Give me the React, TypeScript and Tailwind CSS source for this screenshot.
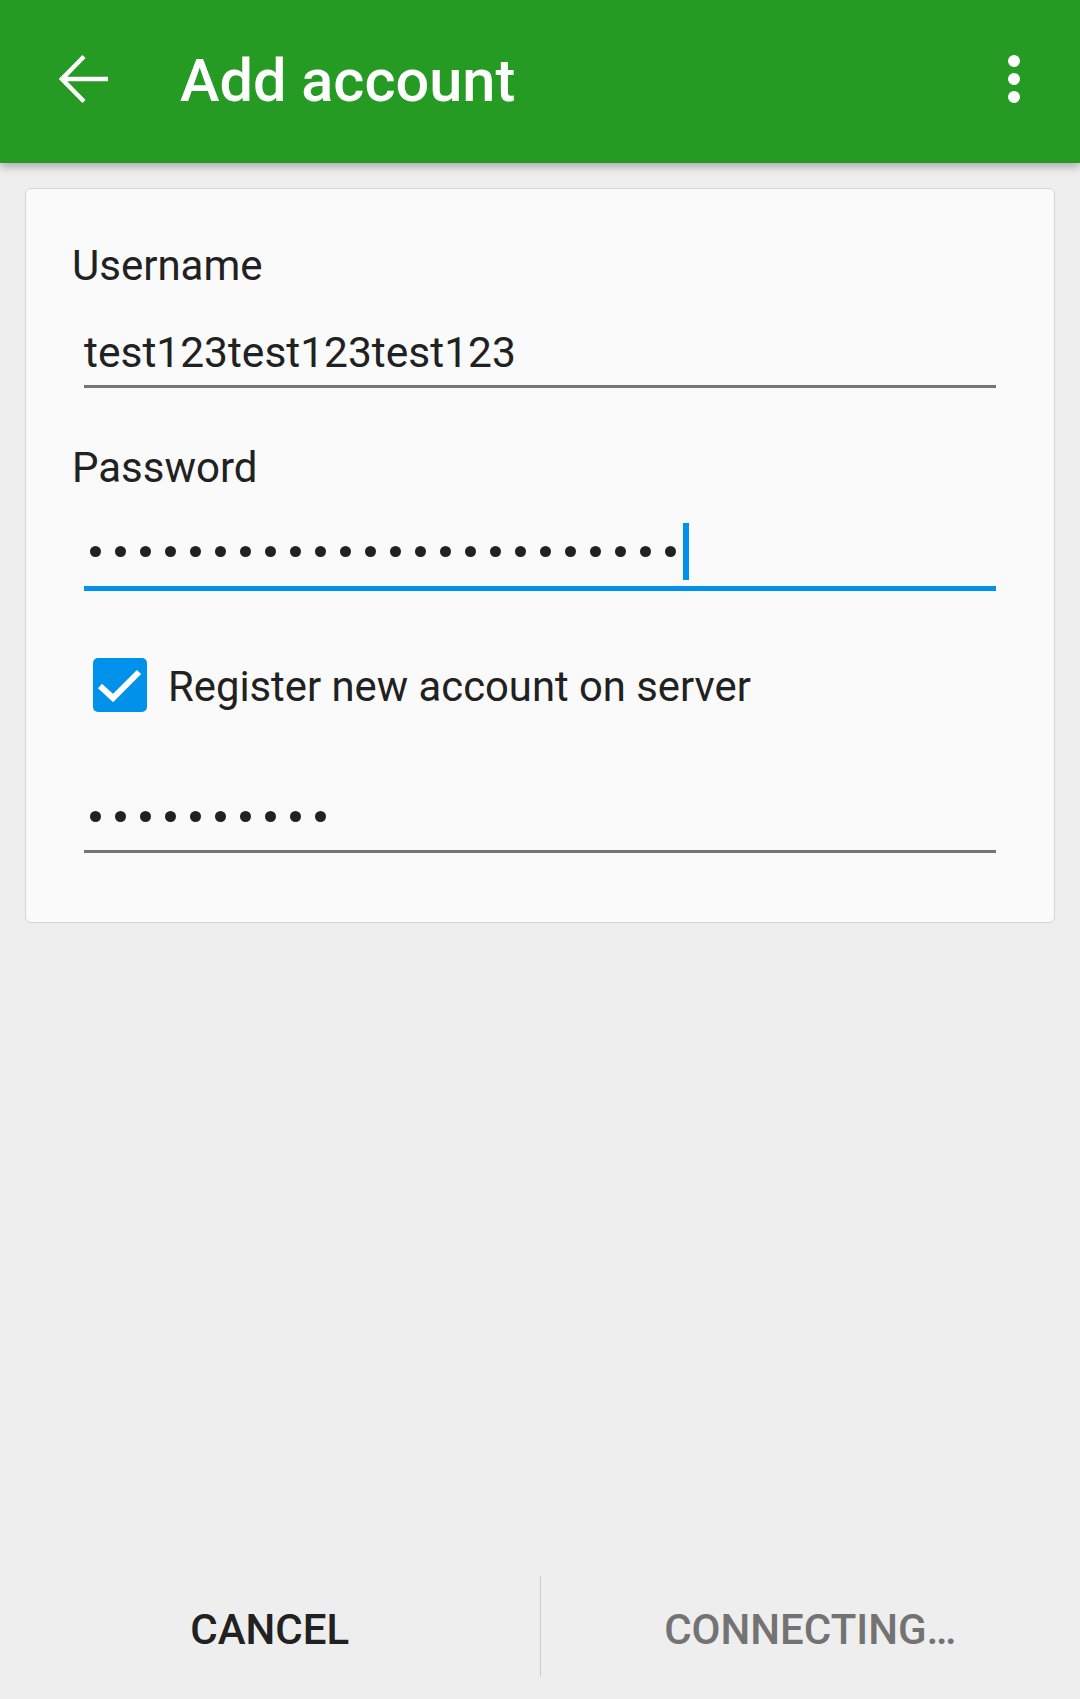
import React from "react";

const Dots = ({ count }: { count: number }) => (
  <div className="flex items-center gap-[14px] pl-[6px]">
    {Array.from({ length: count }).map((_, i) => (
      <span key={i} className="block h-[11px] w-[11px] rounded-full bg-[#212121]" />
    ))}
  </div>
);

const Header = () => (
  <header className="relative z-10 flex h-[163px] items-start bg-[#259b24] text-white shadow-[0_4px_8px_rgba(0,0,0,0.28)]">
    <button className="ml-[59px] mt-[54px] h-[50px] w-[50px]" aria-label="back">
      <svg width="50" height="50" viewBox="0 0 50 50" fill="none">
        <path d="M3 25 H49 M25 2.5 L3 25 L25 47.5" stroke="white" strokeWidth="4.5" />
      </svg>
    </button>
    <h1 className="ml-[71px] mt-[46px] text-[59.5px] leading-[70px] font-medium">Add account</h1>
    <div className="ml-auto mr-[60px] mt-[55px] flex flex-col gap-[6px]">
      <span className="block h-[12px] w-[12px] rounded-full bg-white" />
      <span className="block h-[12px] w-[12px] rounded-full bg-white" />
      <span className="block h-[12px] w-[12px] rounded-full bg-white" />
    </div>
  </header>
);

const AccountForm = () => (
  <section className="mx-[25px] mt-[25px] rounded-[6px] border border-[#d6d6d6] bg-[#fafafa] pb-[69px] pl-[46px] pr-[58px] pt-[52px] text-[#212121]">
    <p className="h-[50px] text-[42px] leading-[50px]">Username</p>
    <div className="ml-[12px] mt-[37px]">
      <p className="h-[50px] text-[42.5px] leading-[50px]">test123test123test123</p>
      <div className="mt-[7px] h-[3px] bg-[#757575]" />
    </div>

    <p className="mt-[55px] h-[50px] text-[42px] leading-[50px]">Password</p>
    <div className="ml-[12px] mt-[30px]">
      <div className="flex h-[57px] items-center">
        <Dots count={24} />
        <span className="ml-[7px] block h-[57px] w-[6px] bg-[#0091ea]" />
      </div>
      <div className="mt-[6px] h-[5px] bg-[#0091ea]" />
    </div>

    <label className="ml-[21px] mt-[67px] flex h-[54px] items-center">
      <span className="flex h-[54px] w-[54px] items-center justify-center rounded-[5px] bg-[#0091ea]">
        <svg width="54" height="54" viewBox="0 0 54 54" fill="none">
          <path d="M7 28 L20 40 L46 14" stroke="white" strokeWidth="6" />
        </svg>
      </span>
      <span className="ml-[21px] mt-[3px] text-[41.8px] leading-[50px]">Register new account on server</span>
    </label>

    <div className="ml-[12px] mt-[79px]">
      <div className="flex h-[50px] items-center">
        <Dots count={10} />
      </div>
      <div className="mt-[9px] h-[3px] bg-[#757575]" />
    </div>
  </section>
);

export default function App() {
  return (
    <div className="flex min-h-[1699px] flex-col bg-[#eeeeee] font-['Roboto','Liberation_Sans',sans-serif]">
      <Header />
      <AccountForm />
      <div className="flex-1" />
      <footer className="flex h-[139px] items-center">
        <button className="flex-1 text-center text-[42px] leading-[50px] font-medium text-[#212121]">CANCEL</button>
        <span className="mt-[16px] block h-[101px] w-px self-start bg-[#cccccc]" />
        <button className="flex-1 text-center text-[42px] leading-[50px] font-medium text-[#737373]">CONNECTING…</button>
      </footer>
    </div>
  );
}
